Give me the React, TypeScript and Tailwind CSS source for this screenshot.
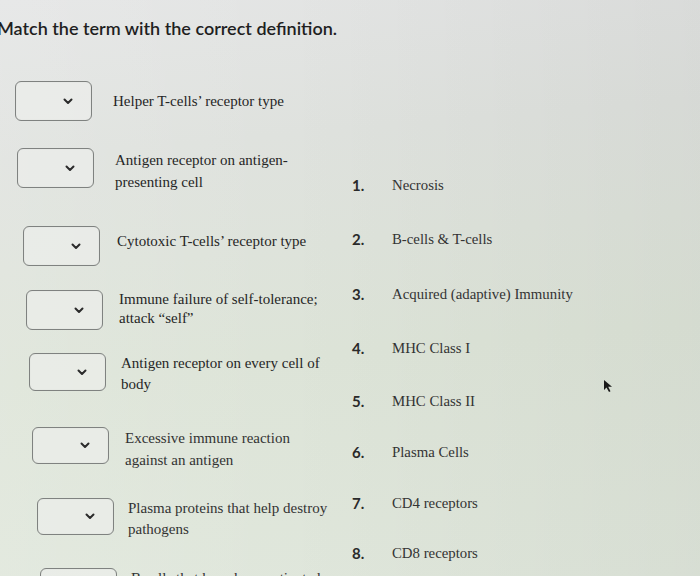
import React from "react";

const Chevron = () => (
  <svg width="10" height="7" viewBox="0 0 10 7" className="block">
    <path d="M1.5 1.5 L5 5 L8.5 1.5" fill="none" stroke="#2b2b2b" strokeWidth="2" strokeLinecap="round" strokeLinejoin="round" />
  </svg>
);

const Box = ({ h }: { h: string }) => (
  <div className={`${h} w-[77px] shrink-0 rounded-[6px] border border-[#7f8280] bg-[#eceeeb]/70 flex items-center justify-end pr-[18px] shadow-[inset_0_0_1px_rgba(0,0,0,0.15)]`}>
    <Chevron />
  </div>
);

export default function App() {
  const serif = { fontFamily: '"Liberation Serif", "Times New Roman", serif' };
  const sans = { fontFamily: 'Lato, "Open Sans", sans-serif' };
  return (
    <div className="relative h-[576px] w-[700px] overflow-hidden bg-[linear-gradient(175deg,#e4e5e5_0%,#dfe2de_25%,#dde4d8_60%,#e0e7dc_100%)]">
      <div className="pointer-events-none absolute inset-0 bg-[linear-gradient(90deg,rgba(255,255,255,0.12)_0%,rgba(255,255,255,0)_40%,rgba(0,0,0,0.04)_100%)]" />
      <div className="relative h-[56px] flex items-center">
        <h1 className="ml-[-3px] text-[18px] font-semibold text-[#1f1f1f] leading-none" style={sans}>
          Match the term with the correct definition.
        </h1>
      </div>
      <div className="relative flex">
        <div className="w-[340px] shrink-0 pt-[25px] text-[15px] text-[#262626]" style={serif}>
          <div className="h-[67px] pl-[15px] flex items-start">
            <Box h="h-[40px]" />
            <div className="ml-[21px] mt-[10px] leading-[21px]">Helper T-cells’ receptor type</div>
          </div>
          <div className="h-[78px] pl-[17px] flex items-start">
            <Box h="h-[40px]" />
            <div className="ml-[21px] mt-[1px] leading-[22px]">Antigen receptor on antigen-<br />presenting cell</div>
          </div>
          <div className="h-[64px] pl-[23px] flex items-start">
            <Box h="h-[40px]" />
            <div className="ml-[17px] mt-[5px] leading-[21px]">Cytotoxic T-cells’ receptor type</div>
          </div>
          <div className="h-[63px] pl-[26px] flex items-start">
            <Box h="h-[40px]" />
            <div className="ml-[16px] mt-[0px] leading-[19px]">Immune failure of self-tolerance;<br />attack “self”</div>
          </div>
          <div className="h-[74px] pl-[29px] flex items-start">
            <Box h="h-[38px]" />
            <div className="ml-[15px] mt-[0px] leading-[21px]">Antigen receptor on every cell of<br />body</div>
          </div>
          <div className="h-[71px] pl-[32px] flex items-start">
            <Box h="h-[37px]" />
            <div className="ml-[16px] mt-[0px] leading-[22px] text-[#333]">Excessive immune reaction<br />against an antigen</div>
          </div>
          <div className="h-[70px] pl-[37px] flex items-start">
            <Box h="h-[37px]" />
            <div className="ml-[14px] mt-[0px] leading-[21px] text-[#333]">Plasma proteins that help destroy<br />pathogens</div>
          </div>
          <div className="h-[40px] pl-[40px] flex items-start">
            <Box h="h-[37px]" />
            <div className="ml-[14px] mt-[0px] leading-[21px] text-[#333]">B cells that have been activated</div>
          </div>
        </div>
        <div className="ml-[12px] pt-[102px] text-[#2c2c2c]">
          {[
            ["1.", "Necrosis", "h-[54px]"],
            ["2.", "B-cells & T-cells", "h-[55px]"],
            ["3.", "Acquired (adaptive) Immunity", "h-[54px]"],
            ["4.", "MHC Class I", "h-[54px]"],
            ["5.", "MHC Class II", "h-[52px]"],
            ["6.", "Plasma Cells", "h-[51px]"],
            ["7.", "CD4 receptors", "h-[51px]"],
            ["8.", "CD8 receptors", "h-[48px]"],
          ].map(([n, t, h]) => (
            <div key={n} className={`${h} flex items-center`}>
              <div className="w-[40px] text-[15px] font-bold text-[#2a2a2a]" style={sans}>{n}</div>
              <div className="text-[14.8px] text-[#333]" style={serif}>{t}</div>
            </div>
          ))}
        </div>
      </div>
      <svg className="absolute left-[602px] top-[379px]" width="12" height="14" viewBox="0 0 12 14">
        <path d="M2 1 L2 11 L4.5 8.5 L7 13 L8.5 12.2 L6.2 7.8 L10 7.8 Z" fill="#1a1a1a" />
      </svg>
    </div>
  );
}
